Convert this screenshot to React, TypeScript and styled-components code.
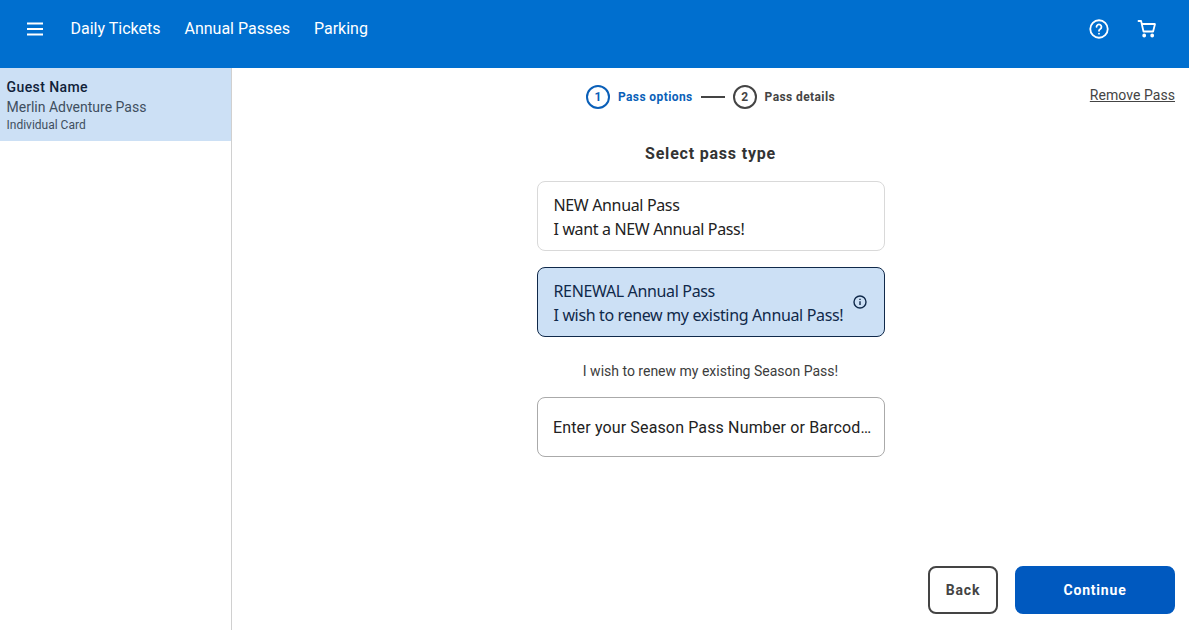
import React from "react";
import styled, { createGlobalStyle } from "styled-components";

const Global = createGlobalStyle`
  html, body { margin: 0; padding: 0; background: #fff; }
  body { font-family: Roboto, "Liberation Sans", sans-serif; }
  * { box-sizing: border-box; }
`;

const Page = styled.div`
  display: flex;
  flex-direction: column;
  width: 1189px;
  height: 630px;
`;

const Header = styled.header`
  display: flex;
  align-items: flex-start;
  height: 68px;
  flex: none;
  background: #006fcf;
  color: #fff;
  padding: 17px 32px 0 25px;
`;

const IconButton = styled.span`
  display: flex;
  align-items: center;
  justify-content: center;
  width: 20px;
  height: 24px;
`;

const Nav = styled.nav`
  display: flex;
  gap: 24px;
  margin-left: 25.5px;
  font-size: 16px;
  line-height: 24px;
`;

const HeaderActions = styled.div`
  display: flex;
  align-items: center;
  gap: 28px;
  margin-left: auto;
`;

const Body = styled.div`
  display: flex;
  flex: 1;
  min-height: 0;
`;

const Sidebar = styled.aside`
  width: 232px;
  flex: none;
  border-right: 1px solid #d0d0d0;
`;

const GuestCard = styled.div`
  display: flex;
  flex-direction: column;
  height: 73px;
  padding: 10px 6px 0 6.5px;
  background: #cce0f5;
`;

const GuestName = styled.div`
  font-size: 14px;
  font-weight: 500;
  line-height: 18px;
  letter-spacing: 0.42px;
  color: #10223a;
`;

const PassName = styled.div`
  font-size: 14px;
  line-height: 22px;
  color: #3f4f60;
`;

const CardType = styled.div`
  font-size: 12px;
  line-height: 15px;
  color: #3f4f60;
`;

const Content = styled.main`
  display: flex;
  flex: 1;
  flex-direction: column;
  align-items: center;
  min-width: 0;
`;

const TopRow = styled.div`
  display: grid;
  grid-template-columns: 1fr auto 1fr;
  align-items: start;
  width: 100%;
  padding: 17px 14px 0;
`;

const Stepper = styled.div`
  display: flex;
  grid-column: 2;
  align-items: center;
`;

const StepCircle = styled.span<{ $active?: boolean }>`
  display: flex;
  align-items: center;
  justify-content: center;
  width: 24px;
  height: 24px;
  border: 2px solid ${(p) => (p.$active ? "#0a5fb8" : "#444")};
  border-radius: 50%;
  font-size: 12px;
  font-weight: 700;
  color: ${(p) => (p.$active ? "#0a5fb8" : "#444")};
`;

const StepLabel = styled.span<{ $active?: boolean }>`
  margin-left: 8px;
  font-size: 12px;
  font-weight: 700;
  letter-spacing: 0.4px;
  color: ${(p) => (p.$active ? "#0a5fb8" : "#444")};
`;

const StepLine = styled.span`
  width: 24px;
  height: 2px;
  margin: 0 8px;
  background: #444;
`;

const RemoveLink = styled.a`
  justify-self: end;
  font-size: 14px;
  line-height: 20px;
  letter-spacing: 0.05px;
  color: #444;
  text-decoration: underline;
`;

const Title = styled.h2`
  margin: 33px 0 0;
  font-size: 16px;
  line-height: 24px;
  font-weight: 700;
  letter-spacing: 0.8px;
  color: #333;
`;

const Options = styled.div`
  display: flex;
  flex-direction: column;
  gap: 16px;
  width: 348px;
  margin-top: 15px;
`;

const OptionCard = styled.div<{ $selected?: boolean }>`
  display: flex;
  align-items: center;
  justify-content: space-between;
  height: 70px;
  padding: 0 17px 0 16px;
  border: 1px solid ${(p) => (p.$selected ? "#10294a" : "#d9d9d9")};
  border-radius: 8px;
  background: ${(p) => (p.$selected ? "#cce0f5" : "#fff")};
  color: ${(p) => (p.$selected ? "#10294a" : "#222")};
  font-family: "Noto Sans", sans-serif;
  font-size: 16px;
  line-height: 24px;
  letter-spacing: -0.35px;
`;

const OptionText = styled.div`
  padding-top: 2px;
  white-space: nowrap;
`;

const InfoIcon = styled.svg`
  flex: none;
`;

const Hint = styled.p`
  margin: 24px 0 0;
  font-size: 14px;
  line-height: 20px;
  color: #3c3c3c;
`;

const PassInput = styled.input`
  width: 348px;
  height: 60px;
  margin-top: 16px;
  padding: 0 12px 0 15.5px;
  border: 1px solid #aaa;
  border-radius: 8px;
  font-family: Roboto, sans-serif;
  font-size: 16px;
  letter-spacing: 0.14px;
  &::placeholder { color: #222; opacity: 1; }
`;

const Footer = styled.div`
  display: flex;
  justify-content: flex-end;
  gap: 17px;
  width: 100%;
  margin-top: auto;
  padding: 0 14px 16px 0;
`;

const ActionButton = styled.button<{ $primary?: boolean }>`
  width: ${(p) => (p.$primary ? "160px" : "70px")};
  height: 48px;
  border: 2px solid ${(p) => (p.$primary ? "#0059bf" : "#444")};
  border-radius: 8px;
  background: ${(p) => (p.$primary ? "#0059bf" : "#fff")};
  color: ${(p) => (p.$primary ? "#fff" : "#444")};
  font-family: Roboto, sans-serif;
  font-size: 14px;
  font-weight: 700;
  letter-spacing: 0.8px;
`;

const Menu = () => (
  <svg width="20" height="16" viewBox="0 0 20 16" fill="none" stroke="#fff" strokeWidth="2">
    <path d="M2 2.5h16M2 8h16M2 13.5h16" />
  </svg>
);

const Help = () => (
  <svg width="22" height="22" viewBox="0 0 22 22" fill="none" stroke="#fff" strokeWidth="2" strokeLinecap="round">
    <circle cx="11" cy="11" r="9.6" />
    <path d="M8.3 8.6a2.7 2.7 0 1 1 4.2 2.3c-.9.6-1.5 1-1.5 2" />
    <path d="M11 16v.1" />
  </svg>
);

const Cart = () => (
  <svg width="20" height="20" viewBox="0 0 20 20" fill="none" stroke="#fff" strokeWidth="1.8" strokeLinejoin="round" strokeLinecap="round">
    <path d="M1.5 2h2.6l2.4 10.5h9.6L18 5H4.8" />
    <circle cx="7.2" cy="16.5" r="1" fill="#fff" />
    <circle cx="15.2" cy="16.5" r="1" fill="#fff" />
  </svg>
);

const Info = () => (
  <InfoIcon width="14" height="14" viewBox="0 0 14 14" fill="none" stroke="#10294a" strokeWidth="1.4">
    <circle cx="7" cy="7" r="6" />
    <path d="M7 6.3v3.6" />
    <path d="M7 3.8v1.3" />
  </InfoIcon>
);

export default function App() {
  return (
    <Page>
      <Global />
      <Header>
        <IconButton><Menu /></IconButton>
        <Nav>
          <span>Daily Tickets</span>
          <span>Annual Passes</span>
          <span>Parking</span>
        </Nav>
        <HeaderActions>
          <IconButton><Help /></IconButton>
          <IconButton><Cart /></IconButton>
        </HeaderActions>
      </Header>
      <Body>
        <Sidebar>
          <GuestCard>
            <GuestName>Guest Name</GuestName>
            <PassName>Merlin Adventure Pass</PassName>
            <CardType>Individual Card</CardType>
          </GuestCard>
        </Sidebar>
        <Content>
          <TopRow>
            <Stepper>
              <StepCircle $active>1</StepCircle>
              <StepLabel $active>Pass options</StepLabel>
              <StepLine />
              <StepCircle>2</StepCircle>
              <StepLabel>Pass details</StepLabel>
            </Stepper>
            <RemoveLink>Remove Pass</RemoveLink>
          </TopRow>
          <Title>Select pass type</Title>
          <Options>
            <OptionCard>
              <OptionText>NEW Annual Pass<br />I want a NEW Annual Pass!</OptionText>
            </OptionCard>
            <OptionCard $selected>
              <OptionText>RENEWAL Annual Pass<br />I wish to renew my existing Annual Pass!</OptionText>
              <Info />
            </OptionCard>
          </Options>
          <Hint>I wish to renew my existing Season Pass!</Hint>
          <PassInput placeholder="Enter your Season Pass Number or Barcod…" />
          <Footer>
            <ActionButton>Back</ActionButton>
            <ActionButton $primary>Continue</ActionButton>
          </Footer>
        </Content>
      </Body>
    </Page>
  );
}
